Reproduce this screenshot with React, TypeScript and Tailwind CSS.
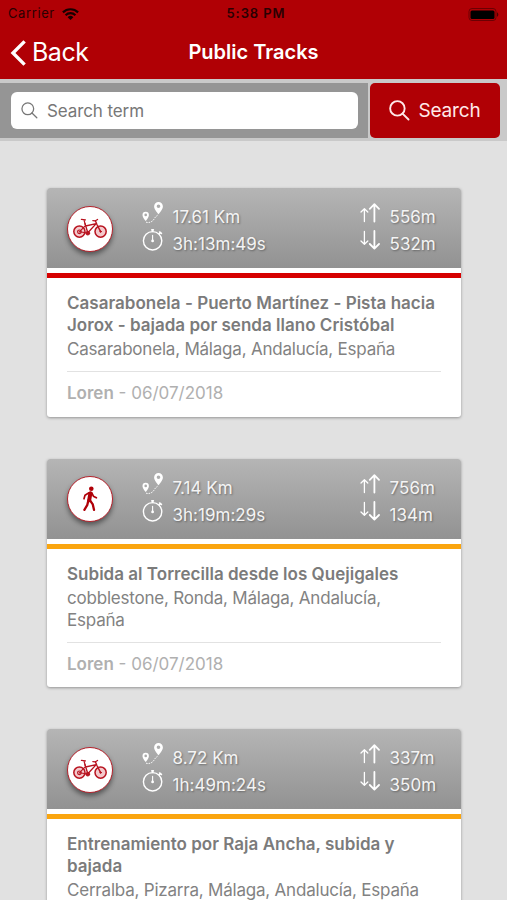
import { ReactNode } from 'react';

type Track = {
  id: number;
  activity: 'bike' | 'walk';
  distance: string;
  duration: string;
  ascent: string;
  descent: string;
  title: string;
  place: string;
  author: string;
  date: string;
  level: 'hard' | 'medium';
};

const tracks: Track[] = [
  {
    id: 1,
    activity: 'bike',
    distance: '17.61 Km',
    duration: '3h:13m:49s',
    ascent: '556m',
    descent: '532m',
    title: 'Casarabonela - Puerto Martínez - Pista hacia Jorox - bajada por senda llano Cristóbal',
    place: 'Casarabonela, Málaga, Andalucía, España',
    author: 'Loren',
    date: '06/07/2018',
    level: 'hard',
  },
  {
    id: 2,
    activity: 'walk',
    distance: '7.14 Km',
    duration: '3h:19m:29s',
    ascent: '756m',
    descent: '134m',
    title: 'Subida al Torrecilla desde los Quejigales',
    place: 'cobblestone, Ronda, Málaga, Andalucía, España',
    author: 'Loren',
    date: '06/07/2018',
    level: 'medium',
  },
  {
    id: 3,
    activity: 'bike',
    distance: '8.72 Km',
    duration: '1h:49m:24s',
    ascent: '337m',
    descent: '350m',
    title: 'Entrenamiento por Raja Ancha, subida y bajada',
    place: 'Cerralba, Pizarra, Málaga, Andalucía, España',
    author: 'Loren',
    date: '06/07/2018',
    level: 'medium',
  },
];

function SearchIcon({ className }: { className: string }) {
  return (
    <svg className={className} viewBox="0 0 20 20" fill="none" stroke="currentColor" strokeLinecap="round">
      <circle cx="8" cy="8" r="6.9" />
      <path d="M12.9 12.9L18.6 18.6" />
    </svg>
  );
}

function BikeIcon() {
  return (
    <svg className="w-[36px] h-[22px] shrink-0" viewBox="0 0 36 22" fill="none" stroke="#b81420" strokeLinecap="round" strokeLinejoin="round">
      <circle cx="7.4" cy="13.6" r="5.6" strokeWidth="1.5" fill="#f3c9cc" />
      <circle cx="28.6" cy="13.6" r="5.6" strokeWidth="1.5" fill="#f3c9cc" />
      <circle cx="7.4" cy="13.8" r="1.8" strokeWidth="1.2" />
      <circle cx="28.6" cy="13.6" r="0.8" strokeWidth="0.9" />
      <path d="M7.4 13.8L13.4 7.6M7.4 13.8L15.6 15" strokeWidth="1.1" />
      <path d="M13 5.6L15.8 14.8L24.2 5.6L13.6 8" strokeWidth="1.4" />
      <path d="M23.4 2.8L24.8 6.2L28.6 13.6" strokeWidth="1.4" />
      <path d="M13.2 6.4L12 1.8M9.4 1.3L13.4 1.8" strokeWidth="1.3" />
      <path d="M20.8 2.6L23.4 2.8L25.6 1.4" strokeWidth="1.2" />
      <circle cx="15.8" cy="15.2" r="1.9" fill="#b81420" strokeWidth="0.8" />
    </svg>
  );
}

function WalkIcon() {
  return (
    <svg className="w-[16px] h-[26px]" viewBox="0 0 16 26" fill="none" stroke="#b00008" strokeLinecap="round" strokeLinejoin="round">
      <circle cx="9.3" cy="2.7" r="2.3" fill="#b00008" stroke="none" />
      <path d="M8.4 7.2L7.2 14.2" strokeWidth="4" />
      <path d="M7 6.8L3 9.2L2 12.8" strokeWidth="1.7" />
      <path d="M9.8 7L11.4 10.2L14.4 11.8" strokeWidth="1.7" />
      <path d="M6.4 14.4L5.2 19.2L2.4 23.8" strokeWidth="2.3" />
      <path d="M8 14.4L10.8 18.4L12 23.8" strokeWidth="2.3" />
    </svg>
  );
}

function RouteIcon() {
  return (
    <svg className="w-[22px] h-[22px]" viewBox="0 0 22 22" fill="none">
      <path
        fill="#fff"
        fillRule="evenodd"
        d="M16.5 0a4.4 4.4 0 0 0-4.4 4.4c0 3 4.4 7.8 4.4 7.8s4.4-4.8 4.4-7.8A4.4 4.4 0 0 0 16.5 0zm0 2.5a1.8 1.8 0 1 1 0 3.6a1.8 1.8 0 0 1 0-3.6z"
      />
      <path
        fill="#fff"
        fillRule="evenodd"
        d="M3.7 9.8a3.2 3.2 0 0 0-3.2 3.2c0 2.4 3.2 6 3.2 6s3.2-3.6 3.2-6a3.2 3.2 0 0 0-3.2-3.2zm0 1.8a1.3 1.3 0 1 1 0 2.6a1.3 1.3 0 0 1 0-2.6z"
      />
      <path d="M4 20.2C8 21.4 11 19.2 12.4 16.6C13.2 14.8 14.6 14 16.4 12.6" stroke="#fff" strokeWidth="0.9" strokeDasharray="1.6 1" />
    </svg>
  );
}

function StopwatchIcon() {
  return (
    <svg className="w-[22px] h-[22px]" viewBox="0 0 22 22" fill="none" stroke="#fff" strokeLinecap="round">
      <circle cx="10.6" cy="11.8" r="9.2" strokeWidth="1.4" />
      <path d="M9.8 0.9h1.6M10.6 0.9v1.6M17.6 3l1.8 1.4M17.2 4.8l1.2-1.2" strokeWidth="1.6" />
      <path d="M10.6 6.4v5" strokeWidth="1.1" />
      <circle cx="10.6" cy="11.9" r="1.4" fill="#fff" stroke="none" />
    </svg>
  );
}

function ArrowsIcon({ down }: { down?: boolean }) {
  return (
    <svg className="w-[20px] h-[20px]" viewBox="0 0 20 20" fill="none" stroke="#fff" strokeLinecap="round" strokeLinejoin="round">
      {down ? (
        <>
          <path d="M4.4 1.4V14M1 11l3.4 3.2L7.8 11" strokeWidth="1.3" />
          <path d="M14.4 1v17.4M9.8 14l4.6 4.6L19 14" strokeWidth="1.8" />
        </>
      ) : (
        <>
          <path d="M4.4 18.6V6M1 9l3.4-3.2L7.8 9" strokeWidth="1.3" />
          <path d="M14.4 18.6V1.4M9.8 5.8l4.6-4.6L19 5.8" strokeWidth="1.8" />
        </>
      )}
    </svg>
  );
}

function Stat({ icon, children }: { icon: ReactNode; children: ReactNode }) {
  return (
    <div className="flex h-[27px] items-center">
      <span className="mb-[9px]">{icon}</span>
      <span className="ml-[9px] pt-[1px] whitespace-nowrap">{children}</span>
    </div>
  );
}

function TrackCard({ track }: { track: Track }) {
  return (
    <article className="mb-[42px] overflow-hidden rounded-[3px] bg-white shadow-[0_1px_3px_rgba(0,0,0,0.35)]">
      <div className="flex h-[80px] bg-linear-to-b from-[#b5b5b5] to-[#929292] pt-[16px] pl-[20px] text-[17px] tracking-[0.02px] text-[#f4f4f4] [text-shadow:1px_1px_2px_rgba(0,0,0,0.35)]">
        <div className="mt-[1.5px] flex h-[46px] w-[46px] shrink-0 items-center justify-center rounded-full border-[1.5px] border-[#b5202a] bg-white shadow-[0_3px_5px_rgba(0,0,0,0.45)]">
          {track.activity === 'bike' ? <BikeIcon /> : <WalkIcon />}
        </div>
        <div className="ml-[28.5px] w-[218px]">
          <Stat icon={<RouteIcon />}>{track.distance}</Stat>
          <Stat icon={<StopwatchIcon />}>{track.duration}</Stat>
        </div>
        <div className="tracking-[0.05px]">
          <Stat icon={<ArrowsIcon />}>
            <span className="ml-[1px]">{track.ascent}</span>
          </Stat>
          <Stat icon={<ArrowsIcon down />}>
            <span className="ml-[1px]">{track.descent}</span>
          </Stat>
        </div>
      </div>
      <div className={`mt-[5px] h-[5px] ${track.level === 'hard' ? 'bg-[#d60000]' : 'bg-[#faa50f]'}`} />
      <div className="px-[20px] pt-[14px] pb-[12.6px] text-[17px] leading-[22px]">
        <h2 className="font-semibold tracking-[0.02px] text-[#7b7b7b]">{track.title}</h2>
        <p className="mt-[2px] tracking-[-0.21px] text-[#828282]">{track.place}</p>
        <div className="mt-[11px] border-t border-[#e2e2e2] pt-[10px] text-[#b0b0b0]">
          <span className="font-semibold">{track.author}</span> - {track.date}
        </div>
      </div>
    </article>
  );
}

export default function App() {
  return (
    <div className="h-[900px] w-[507px] overflow-hidden bg-[#e1e1e1] font-['Inter',sans-serif]">
      <header className="h-[79px] bg-[#b00005]">
        <div className="grid h-[28px] grid-cols-3 items-center px-[8px] text-[13px] text-[#2a0002]">
          <div className="flex items-center gap-[7px] tracking-[0.6px]">
            Carrier
            <svg className="h-[12px] w-[17px]" viewBox="0 0 17 12" fill="none" stroke="#160000" strokeWidth="2.2">
              <path d="M0.9 4.4a10.8 10.8 0 0 1 15.2 0M3.6 7.2a7 7 0 0 1 9.8 0" />
              <path d="M8.5 12L5.6 9.2a4.2 4.2 0 0 1 5.8 0z" fill="#160000" stroke="none" />
            </svg>
          </div>
          <div className="pl-[5px] text-center font-semibold tracking-[0.9px] whitespace-nowrap">5:38 PM</div>
          <div className="flex justify-end">
            <svg className="h-[13px] w-[32px]" viewBox="0 0 32 13">
              <rect x="2" y="0.5" width="27" height="12" rx="3" fill="none" stroke="#6b0003" />
              <rect x="3.5" y="2.5" width="24" height="8.5" rx="1.5" fill="#000" />
              <path d="M30 4.2v4.6c1.8-.8 1.8-3.8 0-4.6z" fill="#4a0002" />
            </svg>
          </div>
        </div>
        <div className="grid h-[48px] grid-cols-3 items-center pl-[10px] pr-[10px] text-white">
          <div className="flex items-center gap-[6px] pt-[1px] text-[25px] tracking-[-0.5px]">
            <svg className="h-[26px] w-[16px]" viewBox="0 0 16 26" fill="none" stroke="currentColor" strokeWidth="3.4">
              <path d="M14.6 1.4L3 13L14.6 24.6" />
            </svg>
            Back
          </div>
          <h1 className="text-center text-[20px] font-semibold whitespace-nowrap">Public Tracks</h1>
        </div>
      </header>

      <div className="flex h-[62px] border-t-[4px] border-b-[3px] border-[#c9c9c9] bg-[#c9c9c9]">
        <div className="flex w-[368px] items-center bg-[#959595] pl-[11px]">
          <div className="flex h-[37px] w-[347px] items-center rounded-[6px] bg-white pl-[10px] text-[17px] tracking-[-0.1px] text-[#777]">
            <SearchIcon className="mr-[9px] h-[17px] w-[17px] stroke-[1.5]" />
            <span className="pt-[2px]">Search term</span>
          </div>
        </div>
        <button className="ml-[2px] flex w-[130px] items-center justify-center gap-[8px] rounded-[5px] bg-[#b00005] text-[19px] tracking-[-0.15px] text-[#ffe9e9]">
          <SearchIcon className="h-[21px] w-[21px] stroke-[1.8]" />
          <span className="pt-[2px]">Search</span>
        </button>
      </div>

      <main className="pt-[47px] pr-[46px] pl-[47px]">
        {tracks.map((track) => (
          <TrackCard key={track.id} track={track} />
        ))}
      </main>
    </div>
  );
}
